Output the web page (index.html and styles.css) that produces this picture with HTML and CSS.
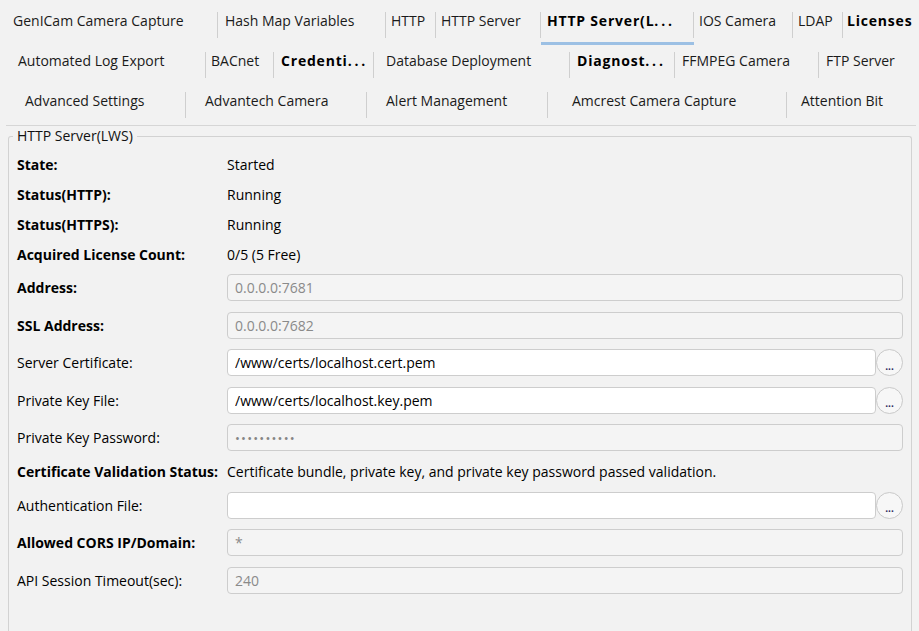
FILE: index.html
```html
<!DOCTYPE html>
<html lang="en">
<head>
    <meta charset="UTF-8">
    <meta name="viewport" content="width=device-width, initial-scale=1.0">
    <title>HTTP Server(LWS)</title>
    <link rel="stylesheet" href="styles.css">
</head>
<body>
    <div class="tabbar">
        <div class="tab-row row1">
            <div class="tab">GenICam Camera Capture</div>
            <div class="tab">Hash Map Variables</div>
            <div class="tab">HTTP</div>
            <div class="tab">HTTP Server</div>
            <div class="tab bold selected">HTTP Server(L<span class="more">...</span></div>
            <div class="tab">IOS Camera</div>
            <div class="tab">LDAP</div>
            <div class="tab bold">Licenses</div>
        </div>
        <div class="tab-row row2">
            <div class="tab">Automated Log Export</div>
            <div class="tab">BACnet</div>
            <div class="tab bold">Credenti<span class="more">...</span></div>
            <div class="tab">Database Deployment</div>
            <div class="tab bold">Diagnost<span class="more">...</span></div>
            <div class="tab">FFMPEG Camera</div>
            <div class="tab">FTP Server</div>
        </div>
        <div class="tab-row row3">
            <div class="tab">Advanced Settings</div>
            <div class="tab">Advantech Camera</div>
            <div class="tab">Alert Management</div>
            <div class="tab">Amcrest Camera Capture</div>
            <div class="tab">Attention Bit</div>
        </div>
    </div>
    <div class="tab-line"></div>

    <fieldset class="group">
        <legend>HTTP Server(LWS)</legend>

        <div class="field text-row">
            <span class="label bold">State:</span>
            <span class="value">Started</span>
        </div>
        <div class="field text-row">
            <span class="label bold">Status(HTTP):</span>
            <span class="value">Running</span>
        </div>
        <div class="field text-row">
            <span class="label bold">Status(HTTPS):</span>
            <span class="value">Running</span>
        </div>
        <div class="field text-row">
            <span class="label bold">Acquired License Count:</span>
            <span class="value">0/5 (5 Free)</span>
        </div>

        <div class="field input-row">
            <span class="label bold">Address:</span>
            <input class="box" type="text" value="0.0.0.0:7681" disabled>
        </div>
        <div class="field input-row">
            <span class="label bold">SSL Address:</span>
            <input class="box" type="text" value="0.0.0.0:7682" disabled>
        </div>
        <div class="field input-row">
            <span class="label">Server Certificate:</span>
            <input class="box editable" type="text" value="/www/certs/localhost.cert.pem">
            <button class="browse">...</button>
        </div>
        <div class="field input-row">
            <span class="label">Private Key File:</span>
            <input class="box editable" type="text" value="/www/certs/localhost.key.pem">
            <button class="browse">...</button>
        </div>
        <div class="field input-row">
            <span class="label">Private Key Password:</span>
            <input class="box secret" type="text" value="••••••••••" disabled>
        </div>
        <div class="field text-row">
            <span class="label bold">Certificate Validation Status:</span>
            <span class="value">Certificate bundle, private key, and private key password passed validation.</span>
        </div>
        <div class="field input-row">
            <span class="label">Authentication File:</span>
            <input class="box editable" type="text" value="">
            <button class="browse">...</button>
        </div>
        <div class="field input-row">
            <span class="label bold">Allowed CORS IP/Domain:</span>
            <input class="box" type="text" value="*" disabled>
        </div>
        <div class="field input-row">
            <span class="label">API Session Timeout(sec):</span>
            <input class="box" type="text" value="240" disabled>
        </div>
    </fieldset>
</body>
</html>
```
FILE: styles.css
```css
body {
    margin: 0;
    height: 631px;
    background-color: #f2f2f2;
    font-family: 'Open Sans', sans-serif;
    font-size: 14px;
    color: #000;
    overflow: hidden;
}
.bold {
    font-weight: bold;
}

/* tab header, three rows */
.tab-row {
    display: grid;
    height: 40px;
}
.row1 {
    grid-template-columns: 217px 168px 50px 105px 153px 99px 50px 1fr;
}
.row2 {
    grid-template-columns: 205px 68px 100px 196px 105px 144px 1fr;
}
.row3 {
    grid-template-columns: 185px 181px 181px 239px 1fr;
}
.tab {
    position: relative;
    padding: 11px 0 0 6px;
    line-height: 20px;
    white-space: nowrap;
    color: #1a1a1a;
}
.tab.bold {
    color: #000;
    letter-spacing: 0.8px;
}
.tab .more {
    letter-spacing: 2.8px;
}
.tab::before {
    content: '';
    position: absolute;
    left: 0;
    top: 12px;
    height: 26px;
    width: 1px;
    background-color: #cfcfcf;
}
.tab:first-child::before {
    display: none;
}
.row1 .tab:first-child {
    padding-left: 13px;
}
.row1 .tab:nth-child(2) {
    padding-left: 8px;
}
.row1 .tab:nth-child(5) {
    padding-left: 7px;
}
.row1 .tab:nth-child(8) {
    padding-left: 5px;
}
.row2 .tab {
    padding-left: 8px;
}
.row2 .tab:first-child {
    padding-left: 18px;
}
.row2 .tab:nth-child(2) {
    padding-left: 6px;
}
.row2 .tab:nth-child(4) {
    padding-left: 13px;
}
.row3 .tab {
    padding-left: 20px;
}
.row3 .tab:first-child {
    padding-left: 25px;
}
.row3 .tab:nth-child(4) {
    padding-left: 25px;
}
.row3 .tab:nth-child(5) {
    padding-left: 15px;
}
.tab.selected::after {
    content: '';
    position: absolute;
    left: 1px;
    right: -1px;
    top: 42px;
    height: 3px;
    background-color: #9cc0e4;
}
.tab-line {
    height: 1px;
    margin: 5px 3px 0 6px;
    background-color: #d6d6d6;
}

/* group box, runs past the bottom of the window */
.group {
    box-sizing: border-box;
    height: 505px;
    margin: 0 7px 0 8px;
    padding: 3px 8px 0 8px;
    border: 1px solid #d2d2d2;
    border-bottom: none;
    border-radius: 3px 3px 0 0;
    min-width: 0;
}
.group legend {
    padding: 0 4px;
    margin-left: -4px;
    line-height: 20px;
    color: #111;
}
.field {
    display: grid;
    grid-template-columns: 210px 1fr auto;
    align-items: center;
}
.text-row {
    height: 30px;
}
.input-row {
    height: 37.5px;
}
.label {
    white-space: nowrap;
}
.value {
    white-space: nowrap;
}
.box {
    height: 27px;
    box-sizing: border-box;
    padding: 0 7px;
    border: 1px solid #cdcdcd;
    border-radius: 4px;
    background-color: #f4f4f4;
    font-family: 'Open Sans', sans-serif;
    font-size: 14px;
    color: #8a8a8a;
    outline: none;
    width: 100%;
}
.box.editable {
    background-color: #fff;
    color: #000;
}
.box.secret {
    font-size: 13px;
    letter-spacing: 1.2px;
    color: #858585;
}
.browse {
    width: 27px;
    height: 27px;
    padding: 6px 0 0 0;
    border: 1px solid #c9c9c9;
    border-radius: 50%;
    background-color: #f7f7f7;
    font-family: 'Open Sans', sans-serif;
    font-size: 10px;
    font-weight: bold;
    line-height: 12px;
    color: #1f1f5a;
    cursor: pointer;
}
```
